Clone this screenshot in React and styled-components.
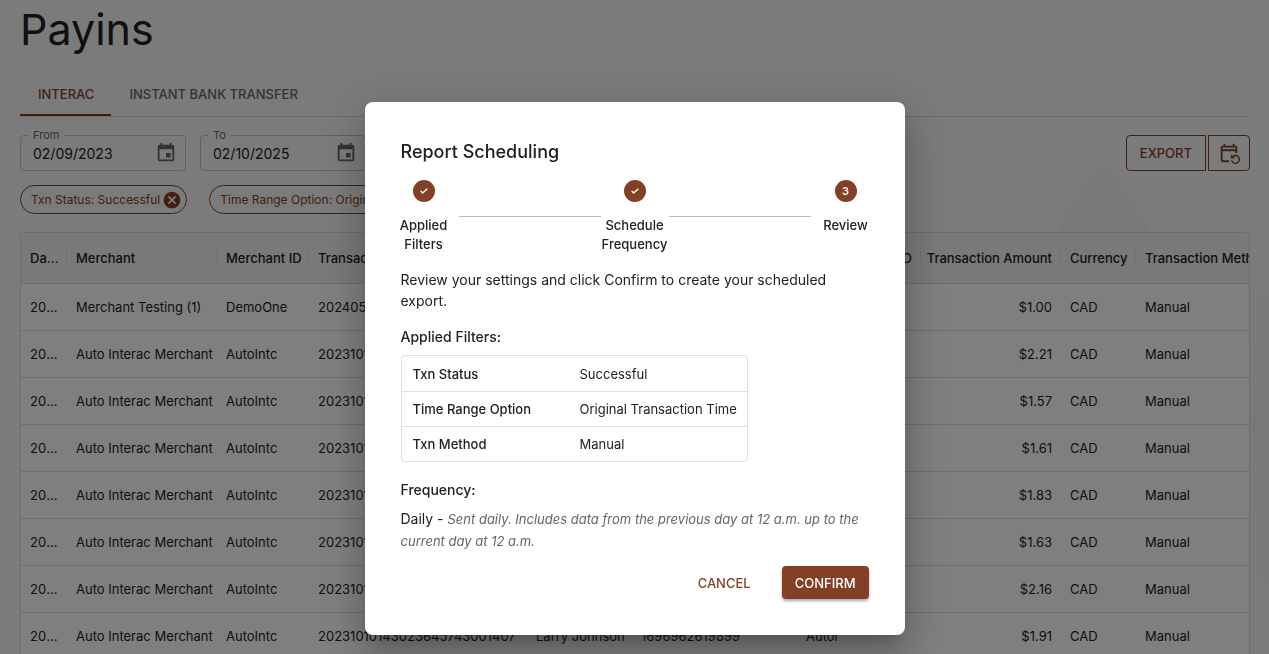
import React from 'react';
import styled, { createGlobalStyle } from 'styled-components';

const GlobalStyle = createGlobalStyle`
  * {
    box-sizing: border-box;
  }

  body {
    margin: 0;
    background-color: #f7f7f7;
    color: #212121;
    font-family: Inter, 'Liberation Sans', sans-serif;
    font-size: 13px;
    overflow: hidden;
  }

  button, input {
    font-family: inherit;
  }
`;

const Page = styled.main`
  position: relative;
  height: 100vh;
  overflow: hidden;
  padding: 0 19px 0 20px;
`;

const Backdrop = styled.svg`
  position: absolute;
  top: 148px;
  right: 0;
  width: 230px;
  height: 506px;
  z-index: -1;
`;

const Title = styled.h1`
  margin: 0;
  font-size: 43px;
  font-weight: 400;
  line-height: 58px;
`;

const Tabs = styled.nav`
  display: flex;
  margin-top: 15px;
  border-bottom: 1px solid #d9d9d9;
`;

const Tab = styled.button`
  height: 43px;
  padding: 0 ${props => props.$active ? '17px' : '18px'} 0 18px;
  border: none;
  border-bottom: 2px solid ${props => props.$active ? '#834026' : 'transparent'};
  background: none;
  color: ${props => props.$active ? '#834026' : '#666'};
  font-size: 13px;
  font-weight: 500;
  cursor: pointer;
`;

const Toolbar = styled.div`
  display: flex;
  align-items: flex-end;
  justify-content: space-between;
  margin-top: 10px;
`;

const Dates = styled.div`
  display: flex;
  gap: 14px;
`;

const DateField = styled.fieldset`
  display: flex;
  align-items: center;
  width: 166px;
  min-width: 0;
  height: 44px;
  margin: 0;
  padding: 0 8px 7px 12px;
  border: 1px solid #c4c4c4;
  border-radius: 4px;
`;

const DateLabel = styled.legend`
  margin-left: -5px;
  padding: 0 5px;
  color: #666;
  font-size: 11px;
  line-height: 16px;
`;

const DateInput = styled.input`
  flex: 1;
  width: 100%;
  min-width: 0;
  padding: 0;
  border: none;
  background: none;
  color: #212121;
  font-size: 14px;
`;

const IconButton = styled.button`
  display: flex;
  padding: 0;
  border: none;
  background: none;
  color: ${props => props.$color || '#666'};
  cursor: pointer;
`;

const Actions = styled.div`
  display: flex;
  gap: 2px;
`;

const OutlinedButton = styled.button`
  display: flex;
  align-items: center;
  height: 36px;
  padding: 0 ${props => props.$icon ? '9px' : '13px'};
  border: 1px solid #834026;
  border-radius: ${props => props.$icon ? '0 4px 4px 0' : '4px 0 0 4px'};
  background: none;
  color: #834026;
  font-size: 13px;
  font-weight: 500;
  cursor: pointer;
`;

const Chips = styled.div`
  display: flex;
  gap: 22px;
  margin-top: 14px;
`;

const Chip = styled.span`
  display: flex;
  align-items: center;
  gap: 2px;
  height: 29px;
  padding: 0 4px 0 10px;
  border: 1px solid #834026;
  border-radius: 15px;
  color: #834026;
  font-size: 12px;
  white-space: nowrap;
`;

const Grid = styled.div`
  margin-top: 18px;
  border: 1px solid #dcdcdc;
  border-radius: 4px;
  background-color: #fff;
  overflow: hidden;
`;

const GridTable = styled.table`
  width: 1283px;
  border-collapse: separate;
  border-spacing: 0;
  table-layout: fixed;
`;

const HeadCell = styled.th`
  height: 51px;
  padding: 0;
  border-bottom: 1px solid #dcdcdc;
  background-color: #f3f3f3;
  font-weight: 500;
  text-align: ${props => props.$right ? 'right' : 'left'};
`;

const HeadLabel = styled.div`
  padding: ${props => props.$right ? '0 8px 0 4px' : '0 5px 0 9px'};
  border-right: 1px solid #e4e4e4;
  line-height: 22px;
  white-space: nowrap;
  overflow: hidden;
  text-overflow: ellipsis;
`;

const Cell = styled.td`
  height: 47px;
  padding: ${props => props.$right ? '0 9px 0 4px' : '0 4px 0 9px'};
  border-bottom: 1px solid #dcdcdc;
  text-align: ${props => props.$right ? 'right' : 'left'};
  white-space: nowrap;
  overflow: hidden;
  text-overflow: ellipsis;
`;

const Overlay = styled.div`
  position: fixed;
  inset: 0;
  display: flex;
  align-items: flex-end;
  justify-content: center;
  padding: 0 0 19px;
  background-color: rgba(0, 0, 0, 0.5);
`;

const Dialog = styled.section`
  width: 540px;
  padding: 36px;
  border-radius: 8px;
  background-color: #fff;
  box-shadow: 0 11px 15px -7px rgba(0, 0, 0, 0.2), 0 24px 38px 3px rgba(0, 0, 0, 0.14), 0 9px 46px 8px rgba(0, 0, 0, 0.12);
`;

const DialogTitle = styled.h2`
  margin: 0;
  font-size: 18px;
  font-weight: 500;
  line-height: 28px;
`;

const Stepper = styled.ol`
  display: flex;
  margin: 14px 0 0;
  padding: 0;
  list-style: none;
`;

const Step = styled.li`
  display: flex;
  flex-direction: column;
  align-items: center;
  gap: 14px;
  width: ${props => props.$width};
  font-size: 13px;
  font-weight: 500;
  line-height: 19px;
  text-align: center;
`;

const StepMark = styled.span`
  display: flex;
  align-items: center;
  justify-content: center;
  width: 22px;
  height: 22px;
  border-radius: 50%;
  background-color: #834026;
  color: #fff;
  font-size: 11px;
  font-weight: 600;
`;

const StepLine = styled.li`
  flex: 1;
  height: 1px;
  margin: 36px ${props => props.$last ? '12px' : '0'} 0 ${props => props.$last ? '0' : '12px'};
  background-color: #bdbdbd;
`;

const Text = styled.p`
  margin: ${props => props.$gap} 0 0;
  font-size: 14px;
  line-height: 21px;
`;

const SubTitle = styled.h3`
  margin: ${props => props.$gap} 0 0;
  font-size: 14px;
  font-weight: 500;
  line-height: 21px;
`;

const Filters = styled.table`
  width: 347px;
  margin-top: 8px;
  border: 1px solid #e0e0e0;
  border-radius: 4px;
  border-collapse: separate;
  border-spacing: 0;
  font-size: 13px;

  tr + tr > * {
    border-top: 1px solid #e0e0e0;
  }
`;

const FilterName = styled.th`
  width: 166px;
  height: 35px;
  padding: 0 0 0 11px;
  font-weight: 500;
  text-align: left;
`;

const FilterValue = styled.td`
  padding: 0 0 0 12px;
`;

const Note = styled.em`
  color: #666;
  font-size: 13px;
`;

const DialogActions = styled.div`
  display: flex;
  justify-content: flex-end;
  gap: 18px;
  margin-top: 14px;
`;

const DialogButton = styled.button`
  height: 33px;
  padding: 0 13px;
  border: none;
  border-radius: 4px;
  background-color: ${props => props.$filled ? '#834026' : 'transparent'};
  box-shadow: ${props => props.$filled ? '0 2px 3px rgba(0, 0, 0, 0.35)' : 'none'};
  color: ${props => props.$filled ? '#fff' : '#834026'};
  font-size: 13px;
  font-weight: 500;
  cursor: pointer;
`;

const columns = [
  { name: 'date', label: 'Date Created', width: 46 },
  { name: 'merchant', label: 'Merchant', width: 150 },
  { name: 'merchantId', label: 'Merchant ID', width: 92 },
  { name: 'txnId', label: 'Transaction ID', width: 218 },
  { name: 'customer', label: 'Customer', width: 105 },
  { name: 'reference', label: 'Reference', width: 165 },
  { name: 'session', label: 'Payin Session ID', width: 124 },
  { name: 'amount', label: 'Transaction Amount', width: 140, right: true },
  { name: 'currency', label: 'Currency', width: 75 },
  { name: 'method', label: 'Transaction Method', width: 168 }
];

const auto = ['Auto Interac Merchant', 'AutoIntc', '20231010143023645743001407', 'Larry Johnson', '1696962619899', 'Autor'];

const rows = [
  ['2024-05-15', 'Merchant Testing (1)', 'DemoOne', '20240515143023645743001407', 'Larry Johnson', '1696962619899', 'Autor', '$1.00'],
  ...['$2.21', '$1.57', '$1.61', '$1.83', '$1.63', '$2.16', '$1.91'].map(amount => ['2023-10-10', ...auto, amount])
];

const filters = [
  ['Txn Status', 'Successful'],
  ['Time Range Option', 'Original Transaction Time'],
  ['Txn Method', 'Manual']
];

const CalendarIcon = () => (
  <svg width="22" height="22" viewBox="0 0 24 24" fill="currentColor" aria-hidden="true">
    <path d="M17 12h-5v5h5v-5zM16 1v2H8V1H6v2H5c-1.11 0-1.99.9-1.99 2L3 19c0 1.1.89 2 2 2h14c1.1 0 2-.9 2-2V5c0-1.1-.9-2-2-2h-1V1h-2zm3 18H5V8h14v11z" />
  </svg>
);

const ScheduleIcon = () => (
  <svg width="22" height="22" viewBox="0 0 24 24" fill="currentColor" aria-hidden="true">
    <path d="M21 12V6c0-1.1-.9-2-2-2h-1V2h-2v2H8V2H6v2H5c-1.1 0-2 .9-2 2v14c0 1.1.9 2 2 2h7v-2H5V10h14v2h2zm-2-4H5V6h14v2zm-3.36 12c.43 1.45 1.77 2.5 3.36 2.5 1.93 0 3.5-1.57 3.5-3.5s-1.57-3.5-3.5-3.5c-.95 0-1.82.38-2.45 1H18V18h-4v-4h1.5v1.43c.9-.88 2.14-1.43 3.5-1.43 2.76 0 5 2.24 5 5s-2.24 5-5 5c-2.42 0-4.44-1.72-4.9-4h1.54z" />
  </svg>
);

const CloseIcon = () => (
  <svg width="20" height="20" viewBox="0 0 24 24" fill="currentColor" aria-hidden="true">
    <path d="M12 2C6.47 2 2 6.47 2 12s4.47 10 10 10 10-4.47 10-10S17.53 2 12 2zm5 13.59L15.59 17 12 13.41 8.41 17 7 15.59 10.59 12 7 8.41 8.41 7 12 10.59 15.59 7 17 8.41 13.41 12 17 15.59z" />
  </svg>
);

const CheckIcon = () => (
  <svg width="8" height="8" viewBox="0 0 24 24" fill="none" stroke="currentColor" strokeWidth="4" aria-hidden="true">
    <path d="M2 12l6 6L22 5" />
  </svg>
);

const DatePicker = ({ id, label, value }) => (
  <DateField>
    <DateLabel><label htmlFor={id}>{label}</label></DateLabel>
    <DateInput id={id} defaultValue={value} />
    <IconButton aria-label={'Choose date ' + label}><CalendarIcon /></IconButton>
  </DateField>
);

const FilterChip = ({ children }) => (
  <Chip>
    {children}
    <IconButton $color="#834026" aria-label="Remove filter"><CloseIcon /></IconButton>
  </Chip>
);

const PayinsTable = () => (
  <Grid>
    <GridTable>
      <colgroup>
        {columns.map(column => <col key={column.name} width={column.width} />)}
      </colgroup>
      <thead>
        <tr>
          {columns.map(column => (
            <HeadCell key={column.name} $right={column.right || column.name === 'session'}>
              <HeadLabel $right={column.right || column.name === 'session'}>{column.label}</HeadLabel>
            </HeadCell>
          ))}
        </tr>
      </thead>
      <tbody>
        {rows.map((row, i) => (
          <tr key={i}>
            {[...row, 'CAD', 'Manual'].map((value, j) => (
              <Cell key={columns[j].name} $right={columns[j].right}>{value}</Cell>
            ))}
          </tr>
        ))}
      </tbody>
    </GridTable>
  </Grid>
);

const ReportDialog = () => (
  <Overlay>
    <Dialog role="dialog" aria-modal="true" aria-labelledby="report-title">
      <DialogTitle id="report-title">Report Scheduling</DialogTitle>
      <Stepper>
        <Step $width="46px"><StepMark><CheckIcon /></StepMark>Applied Filters</Step>
        <StepLine />
        <Step $width="68px"><StepMark><CheckIcon /></StepMark>Schedule Frequency</Step>
        <StepLine $last />
        <Step $width="46px"><StepMark>3</StepMark>Review</Step>
      </Stepper>
      <Text $gap="15px">Review your settings and click Confirm to create your scheduled export.</Text>
      <SubTitle $gap="15px">Applied Filters:</SubTitle>
      <Filters>
        <tbody>
          {filters.map(([name, value]) => (
            <tr key={name}>
              <FilterName scope="row">{name}</FilterName>
              <FilterValue>{value}</FilterValue>
            </tr>
          ))}
        </tbody>
      </Filters>
      <SubTitle $gap="17px">Frequency:</SubTitle>
      <Text $gap="8px">
        Daily - <Note>Sent daily. Includes data from the previous day at 12 a.m. up to the current day at 12 a.m.</Note>
      </Text>
      <DialogActions>
        <DialogButton>CANCEL</DialogButton>
        <DialogButton $filled>CONFIRM</DialogButton>
      </DialogActions>
    </Dialog>
  </Overlay>
);

export default function App() {
  return (
    <>
      <GlobalStyle />
      <Page>
        <Backdrop viewBox="0 0 230 506" aria-hidden="true">
          <defs>
            <linearGradient id="peak" x1="0" y1="0" x2="0" y2="1">
              <stop offset="0" stopColor="#f7f6f5" />
              <stop offset="0.4" stopColor="#f4f1ee" />
              <stop offset="1" stopColor="#f7f7f7" />
            </linearGradient>
            <linearGradient id="hill" x1="0" y1="0" x2="0" y2="1">
              <stop offset="0" stopColor="#f7f6f5" />
              <stop offset="1" stopColor="#f4f1ee" />
            </linearGradient>
          </defs>
          <path d="M64 2L112 86H16z" fill="url(#hill)" />
          <path d="M230 120L180 210V506H230z" fill="url(#peak)" />
        </Backdrop>
        <Title>Payins</Title>
        <Tabs>
          <Tab $active>INTERAC</Tab>
          <Tab>INSTANT BANK TRANSFER</Tab>
        </Tabs>
        <Toolbar>
          <Dates>
            <DatePicker id="from" label="From" value="02/09/2023" />
            <DatePicker id="to" label="To" value="02/10/2025" />
          </Dates>
          <Actions>
            <OutlinedButton>EXPORT</OutlinedButton>
            <OutlinedButton $icon aria-label="Schedule report"><ScheduleIcon /></OutlinedButton>
          </Actions>
        </Toolbar>
        <Chips>
          <FilterChip>Txn Status: Successful</FilterChip>
          <FilterChip>Time Range Option: Original Transaction Time</FilterChip>
        </Chips>
        <PayinsTable />
      </Page>
      <ReportDialog />
    </>
  );
}
